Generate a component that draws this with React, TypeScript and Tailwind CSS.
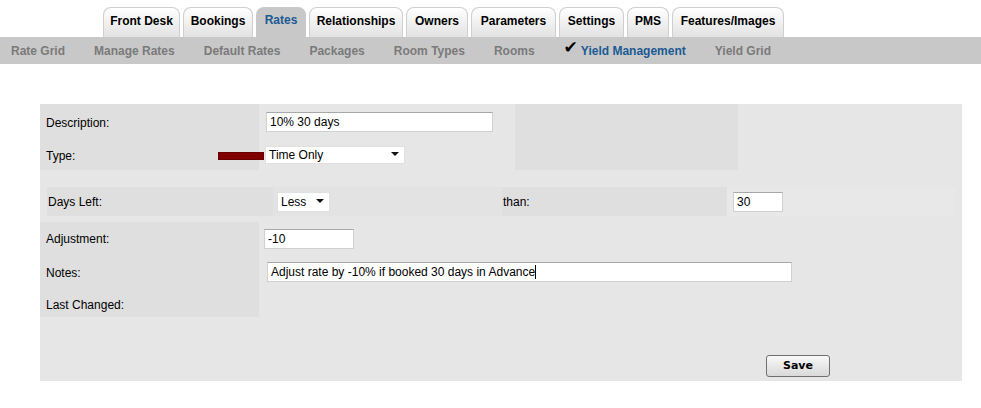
import React from 'react'

const tabs = [
  { name: 'Front Desk', w: 'w-[77px]' },
  { name: 'Bookings', w: 'w-[70px]' },
  { name: 'Rates', w: 'w-[50px]', active: true },
  { name: 'Relationships', w: 'w-[94px]' },
  { name: 'Owners', w: 'w-[62px]' },
  { name: 'Parameters', w: 'w-[85px]' },
  { name: 'Settings', w: 'w-[65px]' },
  { name: 'PMS', w: 'w-[42px]' },
  { name: 'Features/Images', w: 'w-[112px]' },
]

const subItems = ['Rate Grid', 'Manage Rates', 'Default Rates', 'Packages', 'Room Types', 'Rooms']

function Arrow() {
  return (
    <svg width="8" height="5" viewBox="0 0 8 5" className="shrink-0">
      <path d="M0 0 L8 0 L4 4 Z" fill="#111" />
    </svg>
  )
}

function TextBox({ value, className, caret }: { value: string; className: string; caret?: boolean }) {
  return (
    <div
      className={`h-[20px] bg-white border border-[#d0d0d0] border-t-[#a8a8a8] flex items-center pl-[3px] text-[12px] text-black ${className}`}
    >
      <span>{value}</span>
      {caret && <span className="inline-block w-px h-[14px] bg-black" />}
    </div>
  )
}

function SelectBox({ value, className }: { value: string; className: string }) {
  return (
    <div
      className={`bg-white border border-[#e0e0e0] flex items-center justify-between pl-[3px] pr-[5px] text-[12px] text-black ${className}`}
    >
      <span>{value}</span>
      <Arrow />
    </div>
  )
}

export default function App() {
  return (
    <div className="w-[981px] h-[408px] bg-white overflow-hidden font-['Liberation_Sans',Arial,sans-serif]">
      {/* Main tabs */}
      <div className="h-[37px] flex items-end pl-[103px] gap-[3px]">
        {tabs.map((t) =>
          t.active ? (
            <div
              key={t.name}
              className={`${t.w} h-[30px] rounded-t-[8px] bg-[#c8c8c8] flex items-center justify-center pb-[4px] text-[12px] font-bold text-[#1b5a94]`}
            >
              {t.name}
            </div>
          ) : (
            <div
              key={t.name}
              className={`${t.w} h-[30px] rounded-t-[8px] border border-b-0 border-[#cfcfcf] bg-gradient-to-b from-white to-[#e2e2e2] flex items-center justify-center pb-[4px] text-[12px] font-bold text-black`}
            >
              {t.name}
            </div>
          )
        )}
      </div>

      {/* Sub navigation */}
      <div className="h-[27px] bg-[#c8c8c8] flex items-center pl-[11px] gap-[29px] text-[12px] font-bold text-[#7a7a7a]">
        {subItems.map((s) => (
          <span key={s}>{s}</span>
        ))}
        <span className="flex items-center text-[#1b5a94]">
          <span className="text-black text-[17px] leading-none -mt-[7px] mr-[3px] font-['DejaVu_Sans',sans-serif]">✔</span>
          Yield Management
        </span>
        <span>Yield Grid</span>
      </div>

      {/* Form panel */}
      <div className="ml-[40px] mt-[40px] w-[922px] h-[277px] bg-[#e6e6e6] text-[12px] text-black">
        {/* Description / Type */}
        <div className="flex h-[35px]">
          <div className="w-[219px] bg-[#dfdfdf] flex items-center pl-[6px] pt-[3px]">Description:</div>
          <div className="w-[256px] flex items-center pl-[7px]">
            <TextBox value="10% 30 days" className="w-[227px]" />
          </div>
          <div className="w-[223px] bg-[#dfdfdf]" />
        </div>
        <div className="flex h-[31px]">
          <div className="w-[219px] bg-[#dfdfdf] flex items-center pl-[6px]">
            <span className="pt-[2px]">Type:</span>
            <span className="ml-auto -mr-[5px] mt-[2px] w-[46px] h-[8px] bg-[#800000] border border-[#6a0000]" />
          </div>
          <div className="w-[256px] flex items-center pl-[6px]">
            <SelectBox value="Time Only" className="w-[140px] h-[18px]" />
          </div>
          <div className="w-[223px] bg-[#dfdfdf]" />
        </div>

        {/* Days Left */}
        <div className="pt-[17px] pl-[7px]">
          <div className="flex h-[29px] w-[908px]">
            <div className="w-[226px] bg-[#dfdfdf] flex items-center pl-[1px]">Days Left:</div>
            <div className="w-[229px] bg-[#e3e3e3] flex items-center pl-[4px]">
              <SelectBox value="Less" className="w-[53px] h-[20px]" />
            </div>
            <div className="w-[225px] bg-[#dfdfdf] flex items-center pl-[1px]">than:</div>
            <div className="w-[228px] bg-[#e8e8e8] flex items-center pl-[6px]">
              <TextBox value="30" className="w-[50px]" />
            </div>
          </div>
        </div>

        {/* Adjustment / Notes / Last Changed */}
        <div className="mt-[6px]">
          <div className="flex h-[33px]">
            <div className="w-[219px] bg-[#dfdfdf] flex items-center pl-[6px]">Adjustment:</div>
            <div className="flex items-center pl-[5px]">
              <TextBox value="-10" className="w-[90px]" />
            </div>
          </div>
          <div className="flex h-[34px]">
            <div className="w-[219px] bg-[#dfdfdf] flex items-center pl-[6px] pt-[1px]">Notes:</div>
            <div className="flex items-center pl-[8px]">
              <TextBox value="Adjust rate by -10% if booked 30 days in Advance" caret className="w-[525px]" />
            </div>
          </div>
          <div className="flex h-[28px]">
            <div className="w-[219px] bg-[#dfdfdf] flex items-center pl-[6px] pt-[3px]">Last Changed:</div>
          </div>
        </div>

        {/* Save */}
        <div className="pl-[726px] pt-[38px]">
          <button className="w-[64px] h-[22px] rounded-[3px] border border-[#707070] bg-gradient-to-b from-[#f8f8f8] to-[#d9d9d9] text-[11px] font-bold text-black font-['DejaVu_Sans',sans-serif]">
            Save
          </button>
        </div>
      </div>
    </div>
  )
}
